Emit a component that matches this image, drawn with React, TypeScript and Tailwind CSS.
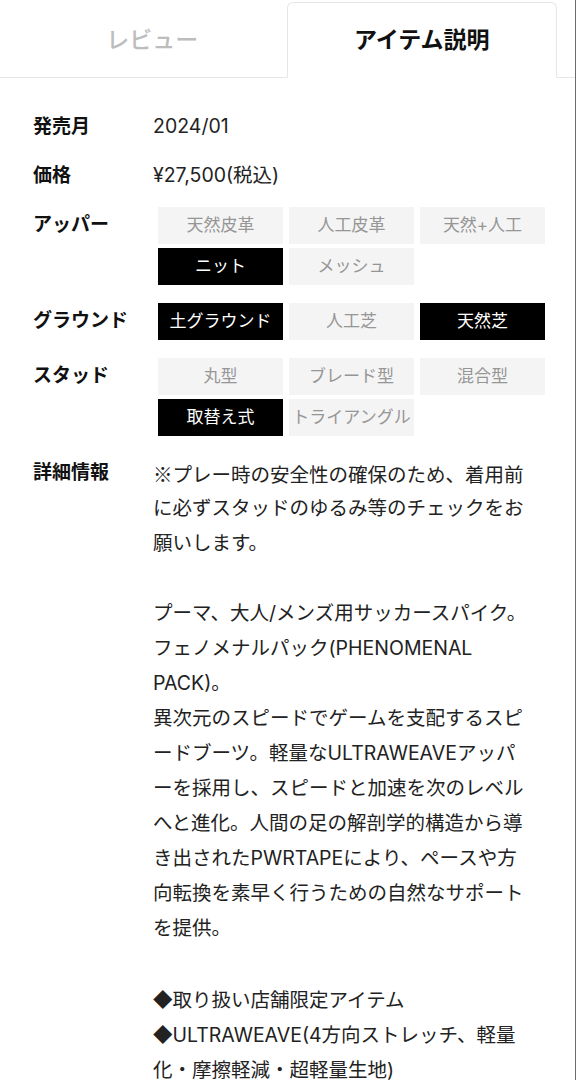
import React from "react";

const font = { fontFamily: 'Inter, "Liberation Sans", "Noto Sans CJK JP", sans-serif' };

type Chip = { label: string; on?: boolean };

function Jp({ text }: { text: string }) {
  const parts = text.split(/([※・◆])/);
  return (
    <>
      {parts.map((p, i) =>
        /^[※・◆]$/.test(p) ? (
          <span key={i} className="font-['Noto_Sans_CJK_JP',sans-serif]">
            {p}
          </span>
        ) : (
          <React.Fragment key={i}>{p}</React.Fragment>
        )
      )}
    </>
  );
}

function Chips({ items }: { items: Chip[] }) {
  return (
    <div className="ml-[5px] grid w-[387px] grid-cols-3 gap-x-[6px] gap-y-[4px]">
      {items.map((c) => (
        <div
          key={c.label}
          className={
            c.on
              ? "flex h-[37px] items-center justify-center whitespace-nowrap bg-black text-[17px] text-white"
              : "flex h-[37px] items-center justify-center whitespace-nowrap bg-[#f4f4f4] text-[17px] text-[#969696]"
          }
        >
          {c.label}
        </div>
      ))}
    </div>
  );
}

function Label({ children }: { children: React.ReactNode }) {
  return <div className="w-[120px] shrink-0 text-[19px] font-bold text-[#111]">{children}</div>;
}

const detail = [
  "※プレー時の安全性の確保のため、着用前",
  "に必ずスタッドのゆるみ等のチェックをお",
  "願いします。",
  "",
  "プーマ、大人/メンズ用サッカースパイク。",
  "フェノメナルパック(PHENOMENAL",
  "PACK)。",
  "異次元のスピードでゲームを支配するスピ",
  "ードブーツ。軽量なULTRAWEAVEアッパ",
  "ーを採用し、スピードと加速を次のレベル",
  "へと進化。人間の足の解剖学的構造から導",
  "き出されたPWRTAPEにより、ペースや方",
  "向転換を素早く行うための自然なサポート",
  "を提供。",
  "",
  "◆取り扱い店舗限定アイテム",
  "◆ULTRAWEAVE(4方向ストレッチ、軽量",
  "化・摩擦軽減・超軽量生地)",
];

export default function App() {
  return (
    <div style={font} className="relative h-[1080px] w-[576px] overflow-hidden border-r border-[#6b6b6b] bg-white text-[#222]">
      {/* Tabs */}
      <div className="flex border-b border-[#e6e6e6] px-[18px] pt-[2px]">
        <div className="-mb-px flex h-[76px] flex-1 items-center justify-center text-[23px] font-medium text-[#bdbdbd]">
          レビュー
        </div>
        <div className="-mb-px flex h-[76px] flex-1 items-center justify-center rounded-t-[6px] border border-[#e6e6e6] border-b-white bg-white text-[23px] font-bold text-[#111]">
          アイテム説明
        </div>
      </div>

      <div className="pl-[33px]">
        <div className="mt-[31px] flex h-[36px] items-center">
          <Label>発売月</Label>
          <div className="text-[19.5px]">2024/01</div>
        </div>
        <div className="mt-[13px] flex h-[36px] items-center">
          <Label>価格</Label>
          <div className="text-[19.5px]">¥27,500(税込)</div>
        </div>
        <div className="mt-[13px] flex items-start">
          <div className="flex h-[37px] items-center">
            <Label>アッパー</Label>
          </div>
          <Chips
            items={[
              { label: "天然皮革" },
              { label: "人工皮革" },
              { label: "天然+人工" },
              { label: "ニット", on: true },
              { label: "メッシュ" },
            ]}
          />
        </div>
        <div className="mt-[18px] flex items-start">
          <div className="flex h-[37px] items-center">
            <Label>グラウンド</Label>
          </div>
          <Chips
            items={[
              { label: "土グラウンド", on: true },
              { label: "人工芝" },
              { label: "天然芝", on: true },
            ]}
          />
        </div>
        <div className="mt-[18px] flex items-start">
          <div className="flex h-[37px] items-center">
            <Label>スタッド</Label>
          </div>
          <Chips
            items={[
              { label: "丸型" },
              { label: "ブレード型" },
              { label: "混合型" },
              { label: "取替え式", on: true },
              { label: "トライアングル" },
            ]}
          />
        </div>
        <div className="mt-[20px] flex items-start">
          <div className="flex h-[35px] items-center">
            <Label>詳細情報</Label>
          </div>
          <div className="text-[19.5px] leading-[35px] text-[#222]">
            {detail.map((l, i) => (
              <div key={i} className="h-[35px] whitespace-nowrap">
                <Jp text={l} />
              </div>
            ))}
          </div>
        </div>
      </div>
    </div>
  );
}
